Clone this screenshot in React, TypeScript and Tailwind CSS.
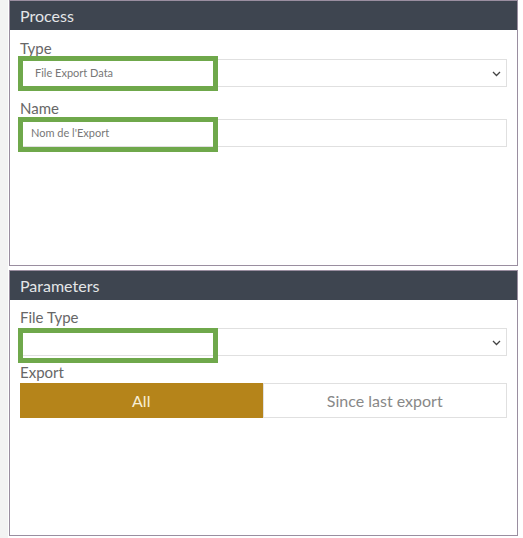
const font = { fontFamily: '"Lato", "Open Sans", sans-serif' };

const Marker = ({ className }: { className: string }) => (
  <div className={`pointer-events-none absolute border-[5px] border-[#6fa84b] ${className}`} />
);

const Chevron = () => (
  <svg width="9" height="6" viewBox="0 0 9 6" className="absolute right-[5px] top-[11px]">
    <path d="M1 1l3.5 3.5L8 1" fill="none" stroke="#444" strokeWidth="1.3" />
  </svg>
);

const Panel = ({ title, children }: { title: string; children: React.ReactNode }) => (
  <div className="h-[266px] border border-[#9a8ea0] bg-white flex flex-col">
    <div className="h-[29px] bg-[#3e4550] text-[#e4e6e8] text-[16px] leading-[29px] px-[10px]">{title}</div>
    <div className="px-[10px] pt-[6px] flex flex-col">{children}</div>
  </div>
);

const Label = ({ text, className = '' }: { text: string; className?: string }) => (
  <div className={`h-[22px] leading-[22px] text-[15px] text-[#676767] ${className}`}>{text}</div>
);

export default function App() {
  return (
    <div className="w-[523px] h-[538px] bg-white flex" style={font}>
      <div className="w-[8px] bg-[#f3f3f3]" />
      <div className="w-[509px] ml-[1px] flex flex-col gap-[4px]">
        <Panel title="Process">
          <Label text="Type" className="mt-[1px]" />
          <div className="relative h-[28px] border border-[#e0e0e0] bg-white">
            <div className="pl-[14px] leading-[26px] text-[11px] text-[#777]">File Export Data</div>
            <Chevron />
            <Marker className="left-[-3px] top-[-4px] w-[200px] h-[35px]" />
          </div>
          <Label text="Name" className="mt-[10px]" />
          <div className="relative h-[28px] border border-[#e0e0e0] bg-white">
            <div className="pl-[10px] leading-[26px] text-[11px] text-[#777]">Nom de l'Export</div>
            <Marker className="left-[-3px] top-[-3px] w-[200px] h-[35px]" />
          </div>
        </Panel>
        <Panel title="Parameters">
          <Label text="File Type" />
          <div className="relative h-[28px] border border-[#e0e0e0] bg-white">
            <Chevron />
            <Marker className="left-[-3px] top-[-1px] w-[200px] h-[35px]" />
          </div>
          <Label text="Export" className="mt-[5px]" />
          <div className="flex h-[35px] text-[16px]">
            <div className="flex-1 bg-[#b5841a] text-[#f7eed6] flex items-center justify-center">All</div>
            <div className="flex-1 border border-[#e0e0e0] text-[#888] flex items-center justify-center">Since last export</div>
          </div>
        </Panel>
      </div>
    </div>
  );
}
